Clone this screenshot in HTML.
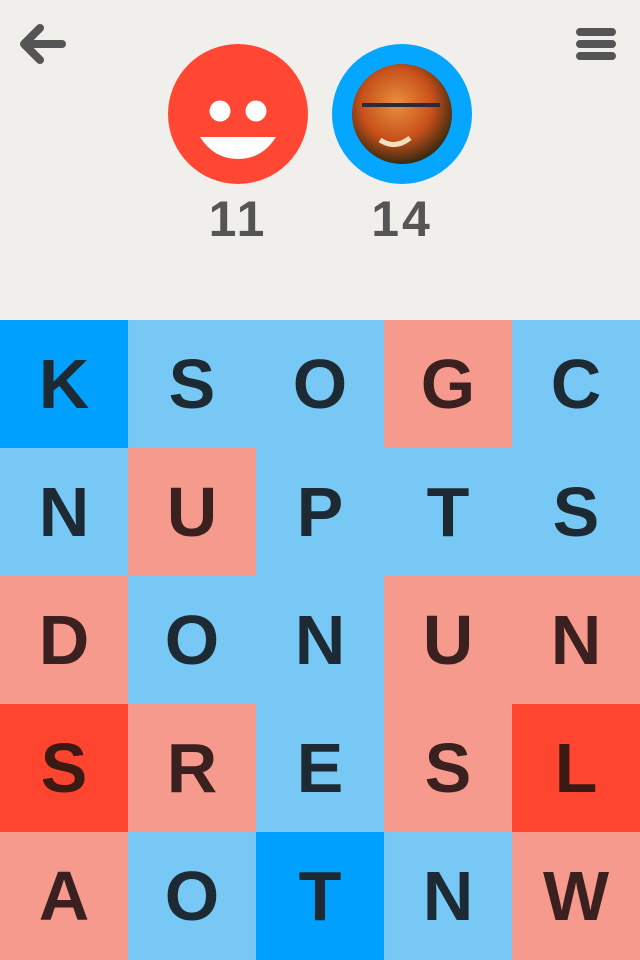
<!DOCTYPE html>
<html><head><style>
body{margin:0;width:640px;height:960px;background:#f0efeb;font-family:"Liberation Sans",sans-serif;position:relative;overflow:hidden}
.num{position:absolute;top:190px;width:120px;text-align:center;font-size:50px;font-weight:bold;color:#555;letter-spacing:3px}
.grid{position:absolute;top:320px;left:0;width:640px;display:grid;grid-template-columns:repeat(5,128px);grid-auto-rows:128px}
.grid div{display:flex;align-items:center;justify-content:center;font-size:70px;font-weight:bold;color:#1d2a33}
.d{background:#00a0ff}.l{background:#78c8f5}.p{background:#f79a8e;color:#3b2020!important}.r{background:#ff4530;color:#3b1a14!important}
</style></head><body>
<svg style="position:absolute;left:0;top:0" width="640" height="200">
<path d="M62 44H26M40 28L24 44L40 60" stroke="#555" stroke-width="8" fill="none" stroke-linecap="round" stroke-linejoin="round"/>
<g stroke="#555" stroke-width="8" stroke-linecap="round"><path d="M580 32H612M580 44H612M580 56H612"/></g>
<circle cx="238" cy="114" r="70" fill="#ff4733"/>
<circle cx="220" cy="111" r="10.5" fill="#fff"/><circle cx="256" cy="111" r="10.5" fill="#fff"/>
<path d="M200 137H276Q262 159 238 159Q214 159 200 137Z" fill="#fff"/>
<circle cx="402" cy="114" r="70" fill="#05a6ff"/>
<defs><radialGradient id="g" cx="0.45" cy="0.4" r="0.6"><stop offset="0" stop-color="#e89040"/><stop offset="0.6" stop-color="#c8501a"/><stop offset="1" stop-color="#3a2a10"/></radialGradient></defs>
<circle cx="402" cy="114" r="50" fill="url(#g)"/>
<path d="M362 105H440" stroke="#2a2a3a" stroke-width="4"/>
<path d="M380 140Q395 150 410 138" stroke="#f4e0c0" stroke-width="5" fill="none"/>
</svg>
<div class="num" style="left:178px">11</div>
<div class="num" style="left:342px">14</div>
<div class="grid">
<div class="d">K</div><div class="l">S</div><div class="l">O</div><div class="p">G</div><div class="l">C</div>
<div class="l">N</div><div class="p">U</div><div class="l">P</div><div class="l">T</div><div class="l">S</div>
<div class="p">D</div><div class="l">O</div><div class="l">N</div><div class="p">U</div><div class="p">N</div>
<div class="r">S</div><div class="p">R</div><div class="l">E</div><div class="p">S</div><div class="r">L</div>
<div class="p">A</div><div class="l">O</div><div class="d">T</div><div class="l">N</div><div class="p">W</div>
</div>
</body></html>
